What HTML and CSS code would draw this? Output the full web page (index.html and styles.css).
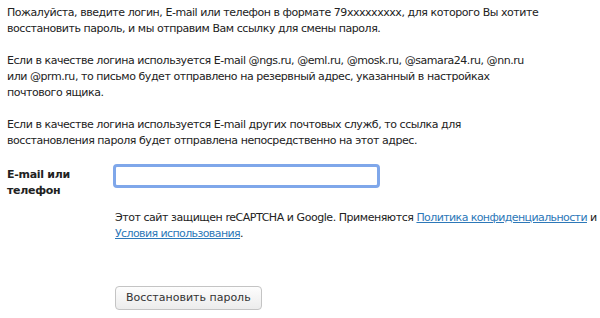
FILE: index.html
```html
<!DOCTYPE html>
<html>
<head>
    <meta charset="UTF-8">
    <title>Восстановление пароля</title>
    <link rel="stylesheet" href="styles.css">
</head>
<body>
    <div class="page">
        <p>Пожалуйста, введите логин, E-mail или телефон в формате 79xxxxxxxxx, для которого Вы хотите<br>восстановить пароль, и мы отправим Вам ссылку для смены пароля.</p>
        <p>Если в качестве логина используется E-mail @ngs.ru, @eml.ru, @mosk.ru, @samara24.ru, @nn.ru<br>или @prm.ru, то письмо будет отправлено на резервный адрес, указанный в настройках<br>почтового ящика.</p>
        <p>Если в качестве логина используется E-mail других почтовых служб, то ссылка для<br>восстановления пароля будет отправлена непосредственно на этот адрес.</p>

        <form class="form">
            <div class="row">
                <label class="label" for="login">E-mail или<br>телефон</label>
                <div class="field">
                    <input id="login" class="input" type="text">
                    <p class="captcha">Этот сайт защищен reCAPTCHA и Google. Применяются <a href="#">Политика конфиденциальности</a> и<br><a href="#">Условия использования</a>.</p>
                </div>
            </div>
            <div class="row actions">
                <button type="button" class="button">Восстановить пароль</button>
            </div>
        </form>
    </div>
</body>
</html>
```

FILE: styles.css
```css
* {
    margin: 0;
    padding: 0;
    box-sizing: border-box;
}

body {
    background: #fff;
    font-family: "DejaVu Sans", Verdana, sans-serif;
    font-size: 11px;
    line-height: 16px;
    letter-spacing: -0.45px;
    color: #222;
}

.page {
    padding: 5px 7px;
}

.page > p {
    margin-bottom: 16px;
}

.page > p:last-of-type {
    margin-bottom: 15px;
}

.row {
    display: flex;
}

.label {
    flex-shrink: 0;
    width: 106px;
    font-weight: bold;
    letter-spacing: -0.3px;
    padding-top: 3px;
}

.field {
    flex: 1;
    display: flex;
    flex-direction: column;
    align-items: flex-start;
}

.input {
    width: 267px;
    height: 24px;
    border: 3px solid #7fa7ea;
    border-radius: 4px;
    outline: none;
    font: inherit;
    padding: 0 4px;
}

.captcha {
    margin-top: 22px;
    padding-left: 2px;
    white-space: nowrap;
}

.captcha a {
    color: #2d78b8;
    letter-spacing: -0.6px;
}

.actions {
    padding-left: 108px;
    padding-top: 44px;
}

.button {
    font: inherit;
    color: #333;
    height: 24px;
    padding: 0 10px;
    border: 1px solid #c4c4c4;
    border-radius: 4px;
    background: linear-gradient(#fdfdfd, #ececec);
}
```
